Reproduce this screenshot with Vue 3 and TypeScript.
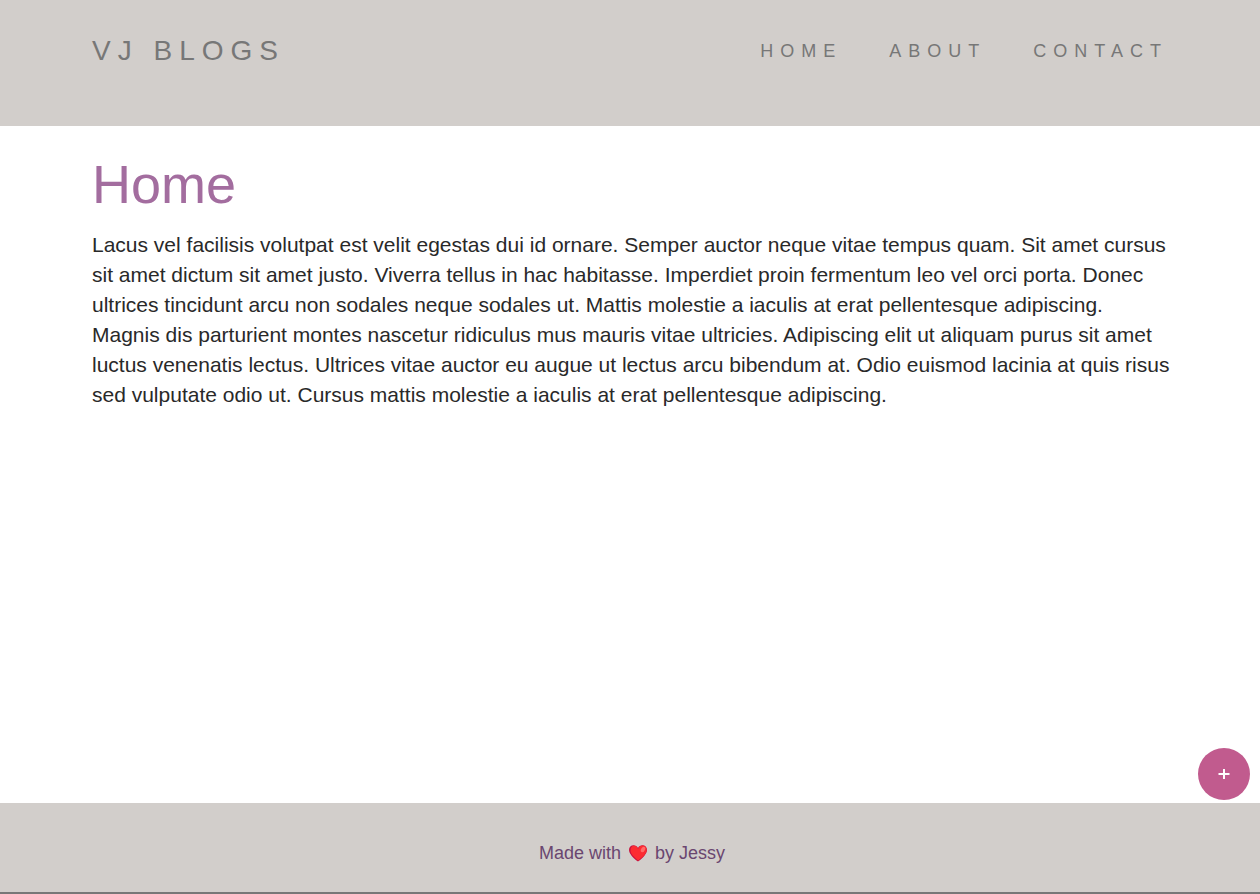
<script setup lang="ts">
interface NavItem { label: string; href: string }
const navItems: NavItem[] = [
  { label: 'Home', href: '#home' },
  { label: 'About', href: '#about' },
  { label: 'Contact', href: '#contact' },
]
</script>

<template>
  <div class="page">
    <header class="header">
      <a class="brand" href="#home">VJ Blogs</a>
      <nav class="nav" aria-label="Main">
        <a v-for="item in navItems" :key="item.label" :href="item.href">{{ item.label }}</a>
      </nav>
    </header>
    <main class="content">
      <h1>Home</h1>
      <p>
        Lacus vel facilisis volutpat est velit egestas dui id ornare. Semper auctor neque vitae tempus quam. Sit amet cursus sit amet dictum sit amet justo. Viverra tellus in hac habitasse. Imperdiet proin fermentum leo vel orci porta. Donec ultrices tincidunt arcu non sodales neque sodales ut. Mattis molestie a iaculis at erat pellentesque adipiscing. Magnis dis parturient montes nascetur ridiculus mus mauris vitae ultricies. Adipiscing elit ut aliquam purus sit amet luctus venenatis lectus. Ultrices vitae auctor eu augue ut lectus arcu bibendum at. Odio euismod lacinia at quis risus sed vulputate odio ut. Cursus mattis molestie a iaculis at erat pellentesque adipiscing.
      </p>
    </main>
    <button class="compose" type="button" aria-label="Compose a post">
      <svg viewBox="0 0 12 12" width="12" height="12" aria-hidden="true"><path d="M6 1v10M0.500 6h11" stroke="#fff" stroke-width="2" /></svg>
    </button>
    <footer class="footer">
      <p>
        <span>Made with</span>
        <svg class="heart" viewBox="0 0 20 18" width="20" height="18" role="img" aria-label="love">
          <path d="M10 17.500C9 17 1 11 1 6C1 3 3 1.200 5.600 1.200C7.500 1.200 9 2.200 10 4C11 2.200 12.500 1.200 14.400 1.200C17 1.200 19 3 19 6C19 11 11 17 10 17.500Z" fill="#c8123f" />
          <path d="M10.300 16.500C8 14.500 2.500 10.500 2.500 6.500C2.500 3.500 4 1.800 6 1.800C8 1.800 9.300 3 10 5C11 2.700 12.500 1.500 14.500 1.500C17 1.500 18.700 3.300 18.700 6C18.700 10.500 12 15 10.300 16.500Z" fill="#fc2c32" />
          <ellipse cx="15" cy="5.500" rx="1.900" ry="3" fill="#ff6b68" transform="rotate(30 15 5.500)" />
        </svg>
        <span>by Jessy</span>
      </p>
    </footer>
  </div>
</template>

<style>
body { margin: 0; }
</style>

<style scoped>
.page {
  display: flex;
  flex-direction: column;
  box-sizing: border-box;
  min-height: 100vh;
  border-bottom: 2px solid #777;
  font-family: "Liberation Sans", Arial, sans-serif;
  color: #292929;
  background: #fff;
}
.header {
  display: flex;
  justify-content: space-between;
  align-items: flex-start;
  box-sizing: border-box;
  min-height: 126px;
  padding: 31px 92px 0;
  background: #d2cecb;
  text-transform: uppercase;
}
.header a { color: #777; text-decoration: none; line-height: 40px; }
.brand { font-size: 28px; letter-spacing: 7px; }
.nav { display: flex; gap: 47px; font-size: 18px; letter-spacing: 7px; }
.content { flex: 1; padding: 25px 84px 0 92px; }
h1 { margin: 0; font-size: 54px; line-height: 66px; font-weight: 400; color: #a36d9f; }
.content p { margin: 13px 0 0; font-size: 21px; line-height: 30px; }
.compose {
  position: fixed;
  right: 10px;
  bottom: 94px;
  display: grid;
  place-items: center;
  width: 52px;
  height: 52px;
  padding: 0;
  border: 0;
  border-radius: 50%;
  background: #c15b8e;
  cursor: pointer;
}
.footer { padding: 35px 20px 24px 24px; background: #d2cecb; }
.footer p {
  display: flex;
  justify-content: center;
  align-items: center;
  gap: 7px;
  margin: 0;
  font-size: 18px;
  line-height: 30px;
  color: #6a4670;
}
</style>
